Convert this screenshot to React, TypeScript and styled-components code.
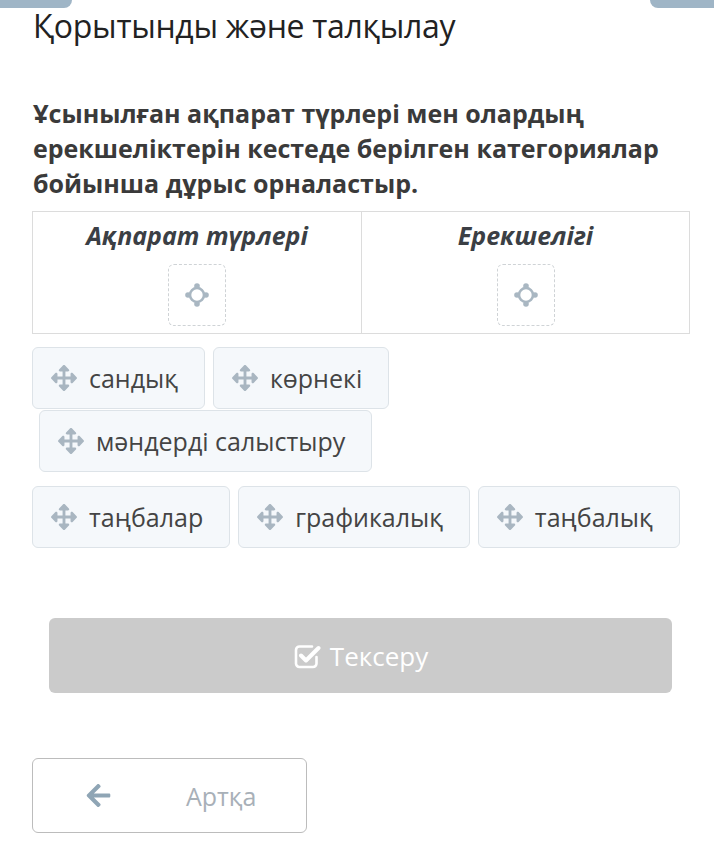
import React from "react";
import styled, { createGlobalStyle } from "styled-components";
import { FaArrowsAlt, FaArrowLeft } from "react-icons/fa";

const Global = createGlobalStyle`
  html, body { margin: 0; padding: 0; background: #fff; }
  body { font-family: "Open Sans", "Noto Sans", sans-serif; }
  * { box-sizing: border-box; }
`;

const Page = styled.div`
  position: relative;
  width: 714px;
  min-height: 857px;
  padding: 0 32px 0 32px;
  display: flex;
  flex-direction: column;
  overflow: hidden;
`;

const TopTab = styled.div<{ $side: "left" | "right" }>`
  position: absolute;
  top: 0;
  height: 8px;
  background: #9fb5c6;
  ${(p) =>
    p.$side === "left"
      ? "left: 0; width: 72px; border-bottom-right-radius: 8px;"
      : "right: 0; width: 64px; border-bottom-left-radius: 8px;"}
`;

const Title = styled.h1`
  margin: 5px 0 0 1px;
  font-size: 32px;
  font-weight: 400;
  line-height: 42px;
  color: #222;
  letter-spacing: -0.3px;
`;

const Question = styled.p`
  margin: 49px 0 0 1px;
  font-size: 25px;
  font-weight: 700;
  line-height: 35px;
  color: #3a3a3a;
`;

const Table = styled.div`
  margin-top: 10px;
  display: grid;
  grid-template-columns: 1fr 1fr;
  border: 1px solid #dcdcdc;
  width: 658px;
`;

const Column = styled.div<{ $last?: boolean }>`
  display: flex;
  flex-direction: column;
  align-items: center;
  padding: 7px 0 7px;
  border-left: ${(p) => (p.$last ? "1px solid #dcdcdc" : "none")};
`;

const ColHeader = styled.div`
  font-size: 25px;
  font-weight: 700;
  font-style: italic;
  color: #3b3f45;
  line-height: 32px;
`;

const DropZone = styled.div`
  margin-top: 13px;
  width: 58px;
  height: 62px;
  border: 1px dashed #cfd3d6;
  border-radius: 6px;
  display: flex;
  align-items: center;
  justify-content: center;
`;

const ChipRow = styled.div<{ $indent?: number; $top?: number }>`
  display: flex;
  gap: 8px;
  margin-left: ${(p) => p.$indent ?? 0}px;
  margin-top: ${(p) => p.$top ?? 0}px;
`;

const Chip = styled.div`
  display: flex;
  align-items: center;
  gap: 12px;
  height: 62px;
  padding: 0 26px 0 18px;
  background: #f5f8fb;
  border: 1px solid #dde3e8;
  border-radius: 6px;
  font-size: 25px;
  color: #444;
  white-space: nowrap;
`;

const ChipIcon = styled(FaArrowsAlt)`
  color: #a9b6c1;
  width: 26px;
  height: 26px;
`;

const CheckButton = styled.div`
  margin: 70px 10px 0 17px;
  height: 75px;
  background: #cbcbcb;
  border-radius: 6px;
  display: flex;
  align-items: center;
  justify-content: center;
  gap: 9px;
  color: #fff;
  font-size: 26px;
`;

const BackButton = styled.div`
  margin-top: 65px;
  width: 275px;
  height: 75px;
  border: 1px solid #bcbcbc;
  border-radius: 6px;
  display: grid;
  grid-template-columns: 120px 1fr;
  align-items: center;
  color: #a8b0b8;
  font-size: 25px;
`;

const BackIcon = styled(FaArrowLeft)`
  justify-self: end;
  margin-right: 41px;
  width: 27px;
  height: 27px;
  color: #8fa5b5;
`;

const BackLabel = styled.span`
  padding-left: 33px;
`;

const Target = () => (
  <svg width="26" height="26" viewBox="0 0 26 26">
    <circle cx="13" cy="13" r="7" fill="none" stroke="#a9b7c2" strokeWidth="2.6" />
    <circle cx="13" cy="4" r="2.8" fill="#a9b7c2" />
    <circle cx="13" cy="22" r="2.8" fill="#a9b7c2" />
    <circle cx="4" cy="13" r="2.8" fill="#a9b7c2" />
    <circle cx="22" cy="13" r="2.8" fill="#a9b7c2" />
  </svg>
);

const CheckSquare = () => (
  <svg width="28" height="28" viewBox="0 0 28 28" fill="none" stroke="#fff">
    <path
      d="M19 4.5H6.5a3.5 3.5 0 0 0-3.5 3.5v13.5a3.5 3.5 0 0 0 3.5 3.5H20a3.5 3.5 0 0 0 3.5-3.5V15"
      strokeWidth="2.6"
      strokeLinecap="round"
    />
    <path d="M8 13.5l5 5L25.5 6" strokeWidth="4" strokeLinecap="round" strokeLinejoin="round" />
  </svg>
);

const DragChip = ({ label }: { label: string }) => (
  <Chip>
    <ChipIcon />
    {label}
  </Chip>
);

export default function App() {
  return (
    <>
      <Global />
      <Page>
        <TopTab $side="left" />
        <TopTab $side="right" />
        <Title>Қорытынды және талқылау</Title>
        <Question>
          Ұсынылған ақпарат түрлері мен олардың ерекшеліктерін кестеде берілген категориялар бойынша дұрыс орналастыр.
        </Question>
        <Table>
          <Column>
            <ColHeader>Ақпарат түрлері</ColHeader>
            <DropZone>
              <Target />
            </DropZone>
          </Column>
          <Column $last>
            <ColHeader>Ерекшелігі</ColHeader>
            <DropZone>
              <Target />
            </DropZone>
          </Column>
        </Table>
        <ChipRow $top={13}>
          <DragChip label="сандық" />
          <DragChip label="көрнекі" />
        </ChipRow>
        <ChipRow $indent={7} $top={1}>
          <DragChip label="мәндерді салыстыру" />
        </ChipRow>
        <ChipRow $top={14}>
          <DragChip label="таңбалар" />
          <DragChip label="графикалық" />
          <DragChip label="таңбалық" />
        </ChipRow>
        <CheckButton>
          <CheckSquare />
          Тексеру
        </CheckButton>
        <BackButton>
          <BackIcon />
          <BackLabel>Артқа</BackLabel>
        </BackButton>
      </Page>
    </>
  );
}
